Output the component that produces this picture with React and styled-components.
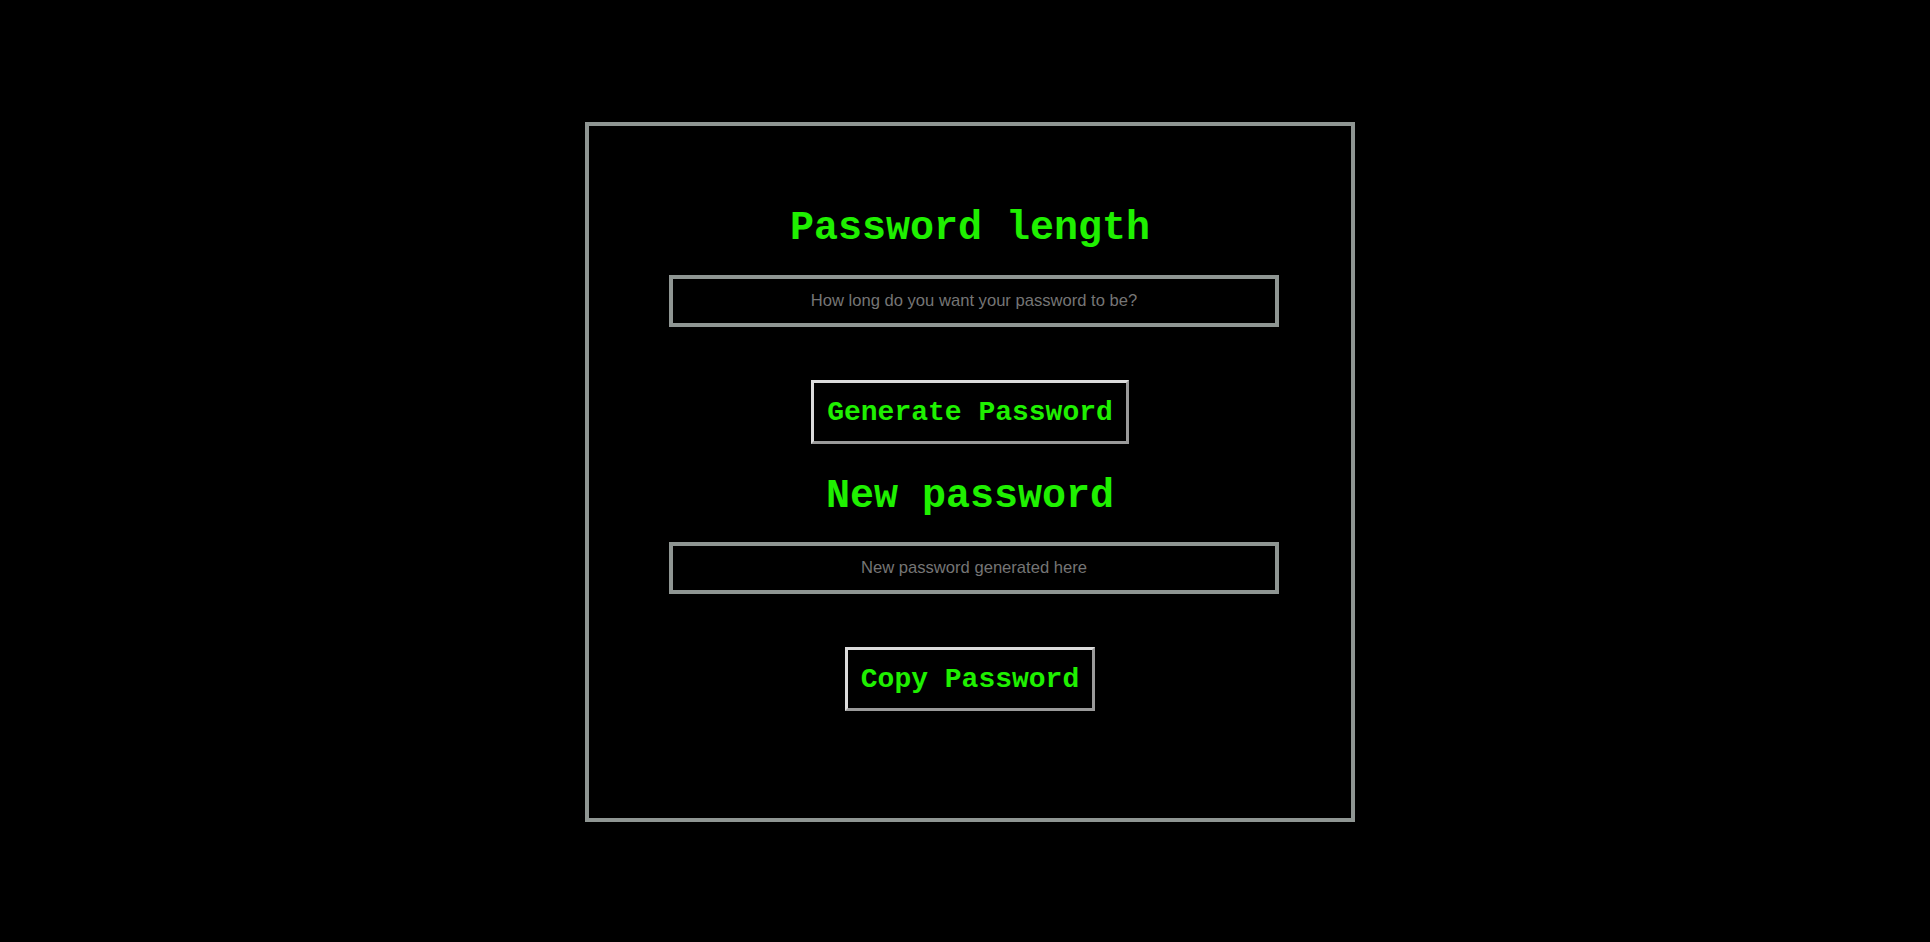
import styled, { createGlobalStyle } from "styled-components";

const GlobalStyle = createGlobalStyle`
  html, body {
    margin: 0;
    background: #000;
  }
`;

const green = "#1ff000";
const frame = "#8f9693";

const Page = styled.div`
  display: flex;
  justify-content: center;
  padding: 122px 0 0 10px;
  min-height: 942px;
  box-sizing: border-box;
  background: #000;
`;

const Card = styled.div`
  width: 770px;
  height: 700px;
  box-sizing: border-box;
  border: 4px solid ${frame};
  padding: 80px 0 0;
  display: flex;
  flex-direction: column;
  align-items: center;
`;

const Title = styled.h2`
  margin: 0 0 ${(p) => p.$gap}px;
  font-family: "Liberation Mono", "Courier New", monospace;
  font-weight: bold;
  font-size: 40px;
  line-height: 45px;
  color: ${green};
`;

const Field = styled.input`
  width: 610px;
  height: 52px;
  box-sizing: border-box;
  margin: 0 0 53px 8px;
  border: 4px solid ${frame};
  background: #000;
  color: ${green};
  text-align: center;
  font-family: "Liberation Sans", Arial, sans-serif;
  font-size: 16.6px;
  outline: none;

  &::placeholder {
    color: #757575;
  }
`;

const Button = styled.button`
  height: 64px;
  padding: 0 13px;
  margin: 0 0 ${(p) => p.$gap || 0}px;
  box-sizing: border-box;
  border: 3px solid;
  border-color: #dcdcdc #9a9a9a #9a9a9a #dcdcdc;
  background: #000;
  color: ${green};
  font-family: "Liberation Mono", "Courier New", monospace;
  font-weight: bold;
  font-size: 28px;
  cursor: pointer;
`;

export default function App() {
  return (
    <>
      <GlobalStyle />
      <Page>
        <Card>
          <Title $gap={24}>Password length</Title>
          <Field placeholder="How long do you want your password to be?" />
          <Button $gap={30}>Generate Password</Button>
          <Title $gap={23}>New password</Title>
          <Field placeholder="New password generated here" readOnly />
          <Button>Copy Password</Button>
        </Card>
      </Page>
    </>
  );
}
